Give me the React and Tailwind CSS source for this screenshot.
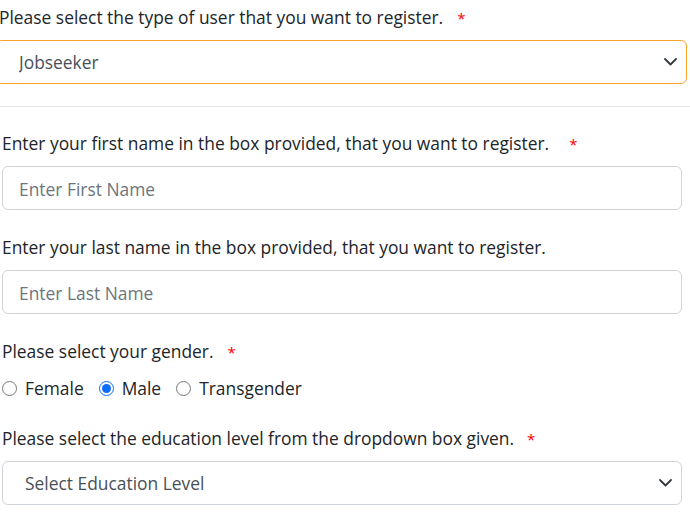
import { useState } from "react";

function Star({ className = "ml-[12px]" }) {
  return <span className={`text-[15px] text-[#ff0000] ${className}`}>*</span>;
}

function Chevron() {
  return (
    <svg
      className="pointer-events-none absolute right-[10px] top-1/2 -translate-y-1/2"
      width="13"
      height="8"
      viewBox="0 0 13 8"
      fill="none"
    >
      <path d="M1 1l5.5 5.5L12 1" stroke="#343a40" strokeWidth="1.8" strokeLinecap="round" strokeLinejoin="round" />
    </svg>
  );
}

export default function App() {
  const [gender, setGender] = useState("male");

  return (
    <div
      className="w-[690px] h-[520px] overflow-hidden bg-white text-[#212529] text-[17.4px]"
      style={{ fontFamily: '"Open Sans", "Noto Sans", sans-serif' }}
    >
      {/* user type */}
      <div className="ml-[-4px] w-[691px] pt-[4px]">
        <label className="block h-[26px] leading-[26px] mb-[10px] pl-[3px]">
          Please select the type of user that you want to register.
          <Star className="ml-[14px]" />
        </label>
        <div className="relative">
          <select
            defaultValue="jobseeker"
            className="appearance-none w-full h-[44px] rounded-md border border-[#fba22a] bg-white pl-[22px] text-[#495057] outline-none"
          >
            <option value="jobseeker">Jobseeker</option>
            <option value="employer">Employer</option>
          </select>
          <Chevron />
        </div>
      </div>

      <hr className="mt-[22px] border-t border-[#e6e6e6]" />

      <div className="pl-[2px] w-[682px] pt-[23px] flex flex-col">
        <label className="h-[26px] leading-[26px] mb-[10px]">
          Enter your first name in the box provided, that you want to register.
          <Star className="ml-[20px]" />
        </label>
        <input
          placeholder="Enter First Name"
          className="h-[44px] rounded-md border border-[#ced4da] px-[16px] pt-[2px] placeholder:text-[#6c757d] outline-none"
        />

        <label className="mt-[24px] h-[26px] leading-[26px] mb-[10px]">
          Enter your last name in the box provided, that you want to register.
        </label>
        <input
          placeholder="Enter Last Name"
          className="h-[44px] rounded-md border border-[#ced4da] px-[16px] pt-[2px] placeholder:text-[#6c757d] outline-none"
        />

        <label className="mt-[24px] h-[26px] leading-[26px] mb-[11px]">
          Please select your gender.
          <Star className="ml-[14px]" />
        </label>
        <div className="flex items-center h-[26px] gap-[15px]">
          {[
            ["female", "Female"],
            ["male", "Male"],
            ["trans", "Transgender"],
          ].map(([v, t]) => (
            <label key={v} className="flex items-center gap-[8px]">
              <input
                type="radio"
                name="gender"
                checked={gender === v}
                onChange={() => setGender(v)}
                className="m-0 w-[15px] h-[15px] accent-[#0d6efd]"
              />
              {t}
            </label>
          ))}
        </div>

        <label className="mt-[24px] h-[26px] leading-[26px] mb-[10px]">
          Please select the education level from the dropdown box given.
          <Star className="ml-[13px]" />
        </label>
        <div className="relative">
          <select
            defaultValue=""
            className="appearance-none w-full h-[44px] rounded-md border border-[#ced4da] bg-white pl-[22px] text-[#495057] outline-none"
          >
            <option value="">Select Education Level</option>
            <option value="hs">High School</option>
            <option value="grad">Graduate</option>
          </select>
          <Chevron />
        </div>
      </div>
    </div>
  );
}
